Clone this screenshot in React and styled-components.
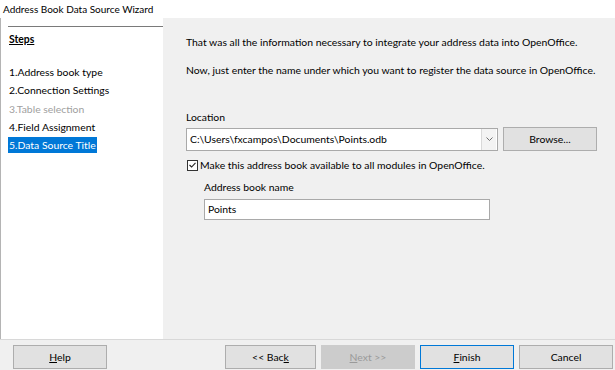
import React from "react";
import styled, { createGlobalStyle } from "styled-components";

const GlobalStyle = createGlobalStyle`
  html, body {
    margin: 0;
    padding: 0;
    background: #ffffff;
  }
  body {
    font-family: Lato, "Noto Sans", sans-serif;
    font-size: 10.4px;
    color: #000000;
  }
`;

const steps = [
  { label: "1.Address book type" },
  { label: "2.Connection Settings" },
  { label: "3.Table selection", disabled: true },
  { label: "4.Field Assignment" },
  { label: "5.Data Source Title", active: true },
];

const Window = styled.div`
  width: 615px;
  height: 370px;
  display: flex;
  flex-direction: column;
  overflow: hidden;
  background: #f0f0f0;
`;

const TitleBar = styled.div`
  height: 18px;
  background: #ffffff;
  padding-left: 3px;
  line-height: 18px;
  font-size: 10px;
  white-space: nowrap;
`;

const Main = styled.div`
  height: 321px;
  display: flex;
`;

/* START: STEPS */
const StepsPanel = styled.div`
  width: 163px;
  flex-shrink: 0;
  background: #ffffff;
  border-left: 1px solid #b4b4b4;
  box-sizing: border-box;
  padding-top: 8px;
`;

const StepsRule = styled.div`
  margin-left: 7px;
  border-top: 1px solid #7a7a7a;
`;

const StepsHeader = styled.div`
  margin: 4px 0 0 8px;
  height: 16px;
  line-height: 16px;
  font-weight: bold;
  text-decoration: underline;
`;

const StepList = styled.div`
  margin-top: 17px;
  padding-left: 7px;
  display: flex;
  flex-direction: column;
  align-items: flex-start;
`;

const Step = styled.div`
  height: 18.3px;
  line-height: 16px;
  white-space: nowrap;
  span {
    display: inline-block;
    padding: 0 1px;
    height: 16px;
    color: ${(p) => (p.active ? "#ffffff" : p.disabled ? "#a0a0a0" : "#000000")};
    background: ${(p) => (p.active ? "#0078d7" : "transparent")};
  }
`;
/* END: STEPS */

/* START: PAGE */
const Page = styled.div`
  flex: 1;
  min-width: 0;
  background: #f0f0f0;
  padding: 16px 0 0 23px;
  display: flex;
  flex-direction: column;
`;

const Para = styled.div`
  line-height: 16px;
  height: 16px;
  margin-top: ${(p) => p.top || 0}px;
  margin-bottom: ${(p) => p.gap || 0}px;
  white-space: nowrap;
  padding-left: ${(p) => p.indent || 0}px;
`;

const Row = styled.div`
  display: flex;
  align-items: center;
  padding-left: ${(p) => p.indent || 0}px;
`;

const Combo = styled.div`
  width: 312px;
  height: 23px;
  box-sizing: border-box;
  border: 1px solid #a9a9a9;
  background: #ffffff;
  display: flex;
  align-items: center;
`;

const ComboText = styled.div`
  flex: 1;
  padding-left: 3px;
  line-height: 16px;
  white-space: nowrap;
`;

const ComboArrow = styled.div`
  width: 15px;
  height: 21px;
  margin-right: 1px;
  box-sizing: border-box;
  border-left: 1px solid #d9d9d9;
  background: #f3f3f3;
  display: flex;
  align-items: center;
  justify-content: center;
`;

const Button = styled.div`
  width: ${(p) => p.w || 94}px;
  height: ${(p) => p.h || 24}px;
  flex-shrink: 0;
  box-sizing: border-box;
  background: ${(p) => (p.disabled ? "#cccccc" : "#e1e1e1")};
  border: 1px solid
    ${(p) => (p.primary ? "#0078d7" : p.disabled ? "#cccccc" : "#adadad")};
  color: ${(p) => (p.disabled ? "#9a9a9a" : "#000000")};
  display: flex;
  align-items: center;
  justify-content: center;
  white-space: nowrap;
  u {
    text-decoration: underline;
  }
`;

const CheckRow = styled.div`
  display: flex;
  align-items: center;
  height: 16px;
  margin-top: 6px;
  white-space: nowrap;
`;

const CheckBox = styled.div`
  width: 9px;
  height: 9px;
  border: 1px solid #333333;
  background: #ffffff;
  margin: 0 2px 0 1px;
  display: flex;
  align-items: center;
  justify-content: center;
`;

const TextInput = styled.div`
  width: 286px;
  height: 21px;
  box-sizing: border-box;
  border: 1px solid #a9a9a9;
  background: #ffffff;
  padding-left: 3px;
  line-height: 19px;
`;
/* END: PAGE */

/* START: FOOTER */
const Footer = styled.div`
  flex: 1;
  border-top: 1px solid #d8d8d8;
  background: #f0f0f0;
  display: flex;
  align-items: center;
  padding: 4px 0 0 13px;
  box-sizing: border-box;
`;

const Spacer = styled.div`
  width: ${(p) => p.w}px;
  flex-shrink: 0;
`;
/* END: FOOTER */

const ChevronDown = () => (
  <svg width="7" height="4" viewBox="0 0 7 4">
    <path d="M0.5 0.5 L3.5 3.5 L6.5 0.5" fill="none" stroke="#6f6f6f" strokeWidth="1" />
  </svg>
);

const Tick = () => (
  <svg width="7" height="6" viewBox="0 0 7 6">
    <path d="M0.5 3 L2.6 5 L6.5 0.8" fill="none" stroke="#222222" strokeWidth="1.1" />
  </svg>
);

const App = () => {
  return (
    <Window>
      <GlobalStyle />
      <TitleBar>Address Book Data Source Wizard</TitleBar>
      <Main>
        <StepsPanel>
          <StepsRule />
          <StepsHeader>Steps</StepsHeader>
          <StepList>
            {steps.map((s) => (
              <Step key={s.label} active={s.active} disabled={s.disabled}>
                <span>{s.label}</span>
              </Step>
            ))}
          </StepList>
        </StepsPanel>
        <Page>
          <Para gap={12}>
            That was all the information necessary to integrate your address data into OpenOffice.
          </Para>
          <Para gap={31}>
            Now, just enter the name under which you want to register the data source in OpenOffice.
          </Para>
          <Para gap={2}>Location</Para>
          <Row>
            <Combo>
              <ComboText>C:\Users\fxcampos\Documents\Points.odb</ComboText>
              <ComboArrow>
                <ChevronDown />
              </ComboArrow>
            </Combo>
            <Spacer w={5} />
            <Button>Browse...</Button>
          </Row>
          <CheckRow>
            <CheckBox>
              <Tick />
            </CheckBox>
            Make this address book available to all modules in OpenOffice.
          </CheckRow>
          <Para indent={18} gap={4} top={6}>
            Address book name
          </Para>
          <Row indent={18}>
            <TextInput>Points</TextInput>
          </Row>
        </Page>
      </Main>
      <Footer>
        <Button>
          <span>
            <u>H</u>elp
          </span>
        </Button>
        <Spacer w={118} />
        <Button w={91}>
          <span>
            &lt;&lt; Bac<u>k</u>
          </span>
        </Button>
        <Spacer w={5} />
        <Button disabled>
          <span>
            <u>N</u>ext &gt;&gt;
          </span>
        </Button>
        <Spacer w={5} />
        <Button primary>
          <span>
            <u>F</u>inish
          </span>
        </Button>
        <Spacer w={5} />
        <Button>Cancel</Button>
      </Footer>
    </Window>
  );
};

export default App;
